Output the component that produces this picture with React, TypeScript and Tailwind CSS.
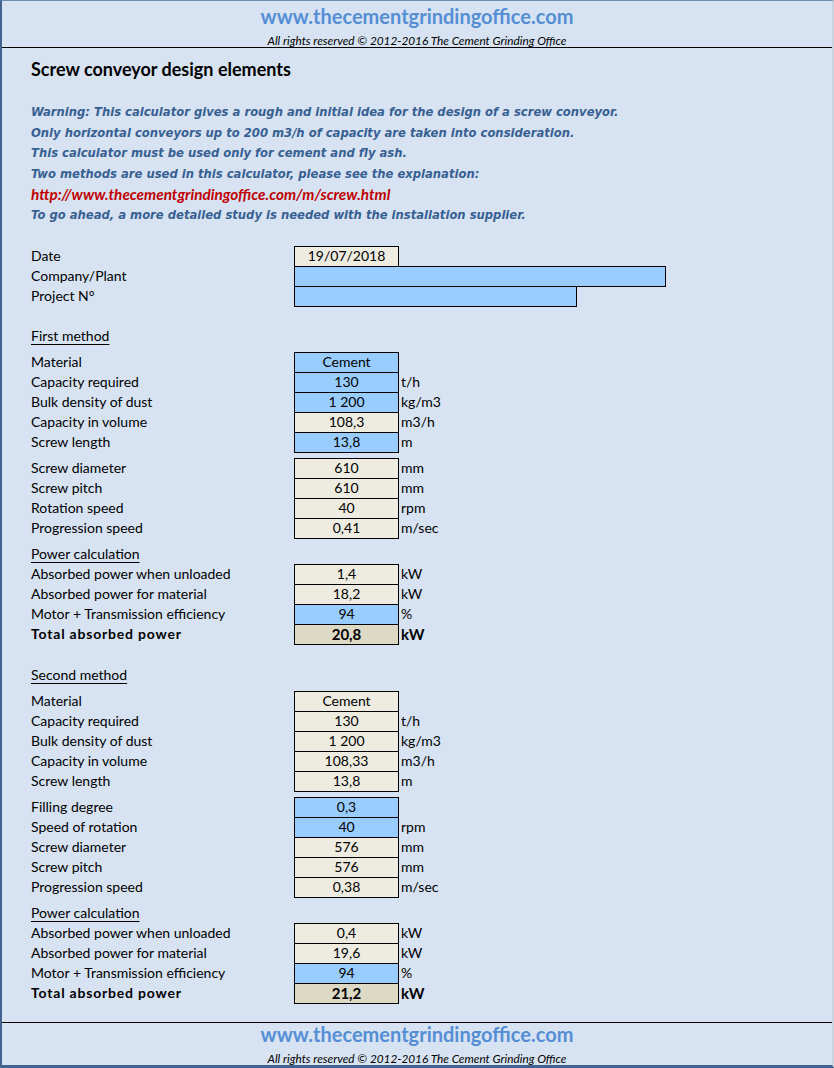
import React from "react";

type Row = {
  label: string;
  value?: string;
  unit?: string;
  kind: "blue" | "tan" | "total";
  bold?: boolean;
};

const boxColor: Record<Row["kind"], string> = {
  blue: "bg-[#99ccff]",
  tan: "bg-[#eeece1]",
  total: "bg-[#ddd9c4]",
};

function Group({ rows, className = "" }: { rows: Row[]; className?: string }) {
  return (
    <div className={"flex flex-col " + className}>
      {rows.map((r, i) => (
        <div key={i} className={"flex items-center h-[21px] " + (i > 0 ? "-mt-px" : "")}>
          <div className={"w-[263px] text-[14px] leading-none " + (r.bold ? "font-bold tracking-[0.8px]" : "")}>{r.label}</div>
          <div
            className={
              "w-[105px] h-[21px] border border-black flex items-center justify-center leading-none " +
              boxColor[r.kind] +
              (r.bold ? " font-bold text-[15px]" : " text-[14px]")
            }
          >
            {r.value}
          </div>
          <div className={"pl-[2px] leading-none " + (r.bold ? "font-bold text-[15px]" : "text-[14px]")}>{r.unit}</div>
        </div>
      ))}
    </div>
  );
}

function Heading({ text, className = "" }: { text: string; className?: string }) {
  return (
    <div className={"h-[20px] flex items-center text-[14px] leading-none " + className}>
      <span className="underline underline-offset-[3px] decoration-1">{text}</span>
    </div>
  );
}

function Banner({ className = "" }: { className?: string }) {
  return (
    <div className={"flex flex-col items-center " + className}>
      <div className="text-[20px] font-bold text-[#558ed5] leading-none h-[22px] flex items-center">
        www.thecementgrindingoffice.com
      </div>
      <div className="text-[11.8px] italic text-black leading-none mt-[8px]">
        All rights reserved © 2012-2016 The Cement Grinding Office
      </div>
    </div>
  );
}

export default function App() {
  const g1: Row[] = [
    { label: "Material", value: "Cement", kind: "blue" },
    { label: "Capacity required", value: "130", unit: "t/h", kind: "blue" },
    { label: "Bulk density of dust", value: "1 200", unit: "kg/m3", kind: "blue" },
    { label: "Capacity in volume", value: "108,3", unit: "m3/h", kind: "tan" },
    { label: "Screw length", value: "13,8", unit: "m", kind: "blue" },
  ];
  const g2: Row[] = [
    { label: "Screw diameter", value: "610", unit: "mm", kind: "tan" },
    { label: "Screw pitch", value: "610", unit: "mm", kind: "tan" },
    { label: "Rotation speed", value: "40", unit: "rpm", kind: "tan" },
    { label: "Progression speed", value: "0,41", unit: "m/sec", kind: "tan" },
  ];
  const g3: Row[] = [
    { label: "Absorbed power when unloaded", value: "1,4", unit: "kW", kind: "tan" },
    { label: "Absorbed power for material", value: "18,2", unit: "kW", kind: "tan" },
    { label: "Motor + Transmission efficiency", value: "94", unit: "%", kind: "blue" },
    { label: "Total absorbed power", value: "20,8", unit: "kW", kind: "total", bold: true },
  ];
  const g4: Row[] = [
    { label: "Material", value: "Cement", kind: "tan" },
    { label: "Capacity required", value: "130", unit: "t/h", kind: "tan" },
    { label: "Bulk density of dust", value: "1 200", unit: "kg/m3", kind: "tan" },
    { label: "Capacity in volume", value: "108,33", unit: "m3/h", kind: "tan" },
    { label: "Screw length", value: "13,8", unit: "m", kind: "tan" },
  ];
  const g5: Row[] = [
    { label: "Filling degree", value: "0,3", kind: "blue" },
    { label: "Speed of rotation", value: "40", unit: "rpm", kind: "blue" },
    { label: "Screw diameter", value: "576", unit: "mm", kind: "tan" },
    { label: "Screw pitch", value: "576", unit: "mm", kind: "tan" },
    { label: "Progression speed", value: "0,38", unit: "m/sec", kind: "tan" },
  ];
  const g6: Row[] = [
    { label: "Absorbed power when unloaded", value: "0,4", unit: "kW", kind: "tan" },
    { label: "Absorbed power for material", value: "19,6", unit: "kW", kind: "tan" },
    { label: "Motor + Transmission efficiency", value: "94", unit: "%", kind: "blue" },
    { label: "Total absorbed power", value: "21,2", unit: "kW", kind: "total", bold: true },
  ];

  const warn = "font-bold italic text-[#376092]";

  return (
    <div
      className="w-[834px] h-[1068px] bg-[#d7e3f3] text-black flex flex-col border-l-2 border-l-[#41638f] border-t border-t-[#6d8db5] border-b-[3px] border-b-[#41638f] border-r-2 border-r-[#c9d4e0] overflow-hidden"
      style={{ fontFamily: "Lato, 'Open Sans', sans-serif" }}
    >
      <Banner className="pt-[4px] h-[46px]" />
      <div className="border-t border-black" />
      <div className="flex-1 pl-[29px] flex flex-col">
        <div className="mt-[10px] h-[22px] flex items-center text-[18px] font-bold leading-none">
          Screw conveyor design elements
        </div>
        <div
          className="mt-[22px] text-[11.6px] leading-[20.6px]"
          style={{ fontFamily: "'DejaVu Sans', Verdana, sans-serif" }}
        >
          <div className={warn}>Warning: This calculator gives a rough and initial idea for the design of a screw conveyor.</div>
          <div className={warn}>Only horizontal conveyors up to 200 m3/h of capacity are taken into consideration.</div>
          <div className={warn}>This calculator must be used only for cement and fly ash.</div>
          <div className={warn}>Two methods are used in this calculator, please see the explanation:</div>
          <div
            className="font-bold italic text-[#c00000] text-[15.3px]"
            style={{ fontFamily: "Lato, sans-serif" }}
          >
            http://www.thecementgrindingoffice.com/m/screw.html
          </div>
          <div className={warn}>To go ahead, a more detailed study is needed with the installation supplier.</div>
        </div>

        <div className="mt-[20px] flex flex-col">
          <div className="flex items-center h-[21px]">
            <div className="w-[263px] text-[14px] leading-none">Date</div>
            <div className="w-[105px] h-[21px] border border-black bg-[#eeece1] flex items-center justify-center text-[14px] leading-none">
              19/07/2018
            </div>
          </div>
          <div className="flex items-center h-[21px] -mt-px">
            <div className="w-[263px] text-[14px] leading-none">Company/Plant</div>
            <div className="w-[372px] h-[21px] border border-black bg-[#99ccff]" />
          </div>
          <div className="flex items-center h-[21px] -mt-px">
            <div className="w-[263px] text-[14px] leading-none">Project N°</div>
            <div className="w-[283px] h-[21px] border border-black bg-[#99ccff]" />
          </div>
        </div>

        <Heading text="First method" className="mt-[19px]" />
        <Group rows={g1} className="mt-[6px]" />
        <Group rows={g2} className="mt-[5px]" />
        <Heading text="Power calculation" className="mt-[5px]" />
        <Group rows={g3} />

        <Heading text="Second method" className="mt-[20px]" />
        <Group rows={g4} className="mt-[6px]" />
        <Group rows={g5} className="mt-[5px]" />
        <Heading text="Power calculation" className="mt-[5px]" />
        <Group rows={g6} />
      </div>
      <div className="border-t border-black" />
      <Banner className="pt-0 h-[42px]" />
    </div>
  );
}
